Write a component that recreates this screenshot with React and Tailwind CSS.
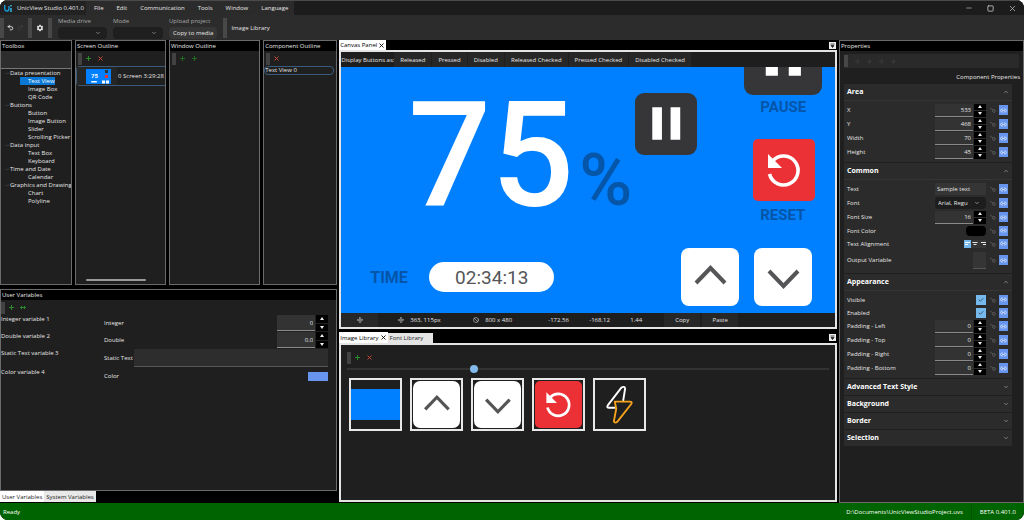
import React, { useId, useState } from 'react';
import { ChevronDown, ChevronUp, Check, Minus, Square, X, Move, Ban, Undo2, Redo2, Link2 } from 'lucide-react';
import { MdSettings } from 'react-icons/md';

const MENUS = ['File', 'Edit', 'Communication', 'Tools', 'Window', 'Language'];

const TOOLBOX = [
  { name: 'Data presentation', items: ['Text View', 'Image Box', 'QR Code'] },
  { name: 'Buttons', items: ['Button', 'Image Button', 'Slider', 'Scrolling Picker'] },
  { name: 'Data input', items: ['Text Box', 'Keyboard'] },
  { name: 'Time and Date', items: ['Calendar'] },
  { name: 'Graphics and Drawing', items: ['Chart', 'Polyline'] },
];

const BUTTON_STATES = ['Released', 'Pressed', 'Disabled', 'Released Checked', 'Pressed Checked', 'Disabled Checked'];

function Grip({ className = 'h-3' }) {
  return <span className={`w-1 shrink-0 bg-[radial-gradient(#5a5a5a_1px,transparent_1px)] bg-[size:2px_2px] opacity-60 ${className}`} />;
}

function ToolButton({ label, className, children }) {
  return (
    <button aria-label={label} className={`w-3 h-3 flex items-center justify-center ${className}`}>
      {children}
    </button>
  );
}

function PlusIcon() {
  return <svg width="5" height="5" viewBox="0 0 5 5"><path d="M2.5 0v5M0 2.5h5" stroke="currentColor" fill="none" /></svg>;
}

function CrossIcon() {
  return <svg width="5" height="5" viewBox="0 0 5 5"><path d="M.5.5l4 4M4.500.5l-4 4" stroke="currentColor" fill="none" /></svg>;
}

function DockPanel({ title, className, children }) {
  return (
    <section className={`flex flex-col border border-[#6b6b6b] bg-[#1f1f1f] overflow-hidden ${className}`}>
      <h2 className="h-[10px] shrink-0 bg-black px-px leading-[10px]">{title}</h2>
      {children}
    </section>
  );
}

function Spinner({ id, value, className = 'w-[51px]', size = 'h-[13px]' }) {
  return (
    <div className={`flex ${size} ${className}`}>
      <input
        id={id}
        defaultValue={value}
        inputMode="decimal"
        className="min-w-0 flex-1 bg-[#333333] border-b border-[#8a8a8a] pr-0.5 text-right outline-none"
      />
      <div className="w-3 ml-px flex flex-col gap-px text-[#eeeeee]">
        <button aria-label="Increase" className="flex-1 bg-black flex items-center justify-center">
          <svg width="4" height="3" viewBox="0 0 4 3"><path d="M0 3l2-3 2 3z" fill="currentColor" /></svg>
        </button>
        <button aria-label="Decrease" className="flex-1 bg-black flex items-center justify-center">
          <svg width="4" height="3" viewBox="0 0 4 3"><path d="M0 0l2 3 2-3z" fill="currentColor" /></svg>
        </button>
      </div>
    </div>
  );
}

function ArrowGlyph({ down, className }) {
  return (
    <svg viewBox="0 0 58 58" className={className}>
      <path d={down ? 'M15 23l14.500 15L44 23' : 'M15 35l14.500-15L44 35'} fill="none" stroke="#555557" strokeWidth="4" />
    </svg>
  );
}

function ResetGlyph({ className }) {
  return (
    <svg viewBox="0 0 62 62" className={className}>
      <path d="M16.500 35A14.500 14.500 0 1 0 20 21.500" fill="none" stroke="#fff" strokeWidth="3.600" />
      <path d="M15 15v14h14z" fill="#fff" />
    </svg>
  );
}

function PauseGlyph({ className }) {
  return (
    <svg viewBox="0 0 61 61" className={className}>
      <path d="M17 14h9.500v32H17zM35 14h9.500v32H35z" fill="#fff" />
    </svg>
  );
}

function BoltGlyph({ className }) {
  return (
    <svg viewBox="0 0 50 50" className={className} fill="none" strokeWidth="2" strokeLinejoin="round" strokeLinecap="round">
      <path d="M20 28.500h-6q-3 0-1.500-2.500L27 7q3.500-2 4 1L29 20.500" stroke="#fff" />
      <path d="M20 22h16q3 0 1.500 2.500L23 43q-3 2.500-4 0l2.500-13.500z" stroke="#f5a21c" />
    </svg>
  );
}

function ScreenThumb() {
  return (
    <svg width="25" height="15" viewBox="0 0 25 15" className="shrink-0">
      <rect width="25" height="15" fill="#0080ff" />
      <text x="5" y="9" fontSize="6" fontWeight="700" fontFamily="Roboto, sans-serif" fill="#fff">75</text>
      <rect x="19" y="1" width="3" height="3" fill="#333" />
      <rect x="19" y="6" width="3" height="3" fill="#eb3135" />
      <rect x="5" y="12" width="6" height="1.500" rx=".7" fill="#fff" />
      <rect x="16" y="11.500" width="3" height="3" fill="#fff" />
      <rect x="20" y="11.500" width="3" height="3" fill="#fff" />
    </svg>
  );
}

function TitleBar() {
  return (
    <header className="h-[15px] flex items-center bg-[#1c1c1c] border-t border-[#4a4a4a]">
      <div className="self-stretch flex items-center bg-[#2b2b2b]">
        <div className="w-[86px] h-full bg-[#222222] flex items-center pl-1 gap-[5px] whitespace-nowrap">
          <svg width="8" height="7" viewBox="0 0 8 7" fill="none">
            <path d="M.7 0v3.500Q.9 6 3 6T5 3V1" stroke="#149ddd" strokeWidth="1.400" />
            <path d="M7 3v4M7 0v1.500" stroke="#35c3f0" strokeWidth="1.400" />
          </svg>
          UnicView Studio 0.401.0
        </div>
        <nav className="flex items-center gap-px pl-0.5">
          {MENUS.map((m) => (
            <button key={m} className="px-1.5">{m}</button>
          ))}
        </nav>
      </div>
      <div className="ml-auto flex items-center gap-[14px] pr-[7px] text-[#bdbdbd]">
        <button aria-label="Minimize"><Minus size={8} /></button>
        <button aria-label="Maximize"><Square size={7} strokeWidth={3} /></button>
        <button aria-label="Close"><X size={9} /></button>
      </div>
    </header>
  );
}

function ToolbarSelect({ label, className }) {
  const id = useId();
  return (
    <div className={`flex flex-col ${className}`}>
      <label htmlFor={id} className="h-[10px] leading-[8px] text-[#a8a8a8]">{label}</label>
      <div className="relative">
        <select id={id} className="block w-full h-3 appearance-none rounded-sm bg-[#1f1f1f]" />
        <ChevronDown size={6} className="absolute right-1.5 top-[3px] pointer-events-none text-[#cccccc]" />
      </div>
    </div>
  );
}

function MainToolbar() {
  return (
    <div className="h-[25px] flex items-center gap-1.5 bg-[#2c2c2c] whitespace-nowrap">
      <div className="flex items-center gap-[3px]">
        <Grip className="h-5" />
        <button aria-label="Undo"><Undo2 size={7} strokeWidth={3} /></button>
        <button aria-label="Redo" className="text-[#4a4a4a]"><Redo2 size={7} /></button>
        <Grip className="h-5 ml-px" />
        <button aria-label="Settings" className="ml-px"><MdSettings size={8} /></button>
        <Grip className="h-5 ml-px" />
      </div>
      <ToolbarSelect label="Media drive" className="w-[49px]" />
      <ToolbarSelect label="Mode" className="w-[50px]" />
      <div className="flex flex-col">
        <span className="h-[10px] leading-[8px] text-[#a8a8a8]">Upload project</span>
        <button className="h-3 px-1 rounded-sm bg-[#363636]">Copy to media</button>
      </div>
      <Grip className="h-5" />
      <button className="-ml-0.5">Image Library</button>
    </div>
  );
}

function Toolbox() {
  const [selected, setSelected] = useState('Text View');
  return (
    <DockPanel title="Toolbox" className="w-[72px] shrink-0">
      <input aria-label="Search toolbox" className="h-[18px] shrink-0 bg-[#2d2d2d] border-b border-[#777777]" />
      <ul className="whitespace-nowrap leading-[8px]">
        {TOOLBOX.map((group) => (
          <li key={group.name}>
            <button className="flex items-center h-2 pl-1">
              <ChevronDown size={5} className="text-[#777777]" />
              {group.name}
            </button>
            <ul className="pl-[19px]">
              {group.items.map((item) => (
                <li key={item} className="h-2">
                  <button
                    onClick={() => setSelected(item)}
                    className={`block h-2 leading-[8px] pl-2 ${item === selected ? 'bg-[#0a78d4] text-white' : ''}`}
                  >
                    {item}
                  </button>
                </li>
              ))}
            </ul>
          </li>
        ))}
      </ul>
    </DockPanel>
  );
}

function Outlines() {
  return (
    <div className="flex gap-[3px] h-[245px]">
      <Toolbox />
      <DockPanel title="Screen Outline" className="flex-1 min-w-0">
        <div className="h-[15px] flex items-center pl-0.5">
          <Grip />
          <ToolButton label="Add screen" className="text-[#2a8a2a]"><PlusIcon /></ToolButton>
          <ToolButton label="Delete screen" className="text-[#c04a35]"><CrossIcon /></ToolButton>
        </div>
        <button className="h-5 flex items-center border border-r-0 border-[#3a5c7c] rounded-l-sm whitespace-nowrap">
          <span className="h-full pl-[9px] pr-1.5 flex items-center bg-[#262626]"><ScreenThumb /></span>
          <span className="pl-px">0 Screen 3:29:28</span>
        </button>
        <div className="mt-auto mb-[3px] ml-[10px] w-[60px] h-0.5 shrink-0 rounded bg-[#9a9a9a]" />
      </DockPanel>
      <DockPanel title="Window Outline" className="flex-1 min-w-0">
        <div className="h-[15px] flex items-center pl-0.5">
          <Grip />
          <ToolButton label="Add window" className="text-[#1f6a1f]"><PlusIcon /></ToolButton>
          <ToolButton label="Duplicate window" className="text-[#1f6a1f]"><PlusIcon /></ToolButton>
        </div>
      </DockPanel>
      <DockPanel title="Component Outline" className="w-[74px] shrink-0">
        <div className="h-[15px] flex items-center pl-0.5">
          <Grip />
          <ToolButton label="Delete component" className="text-[#c04a35]"><CrossIcon /></ToolButton>
        </div>
        <button className="h-[9px] mr-0.5 border border-[#3a5c7c] rounded-sm text-left leading-[7px]">Text View 0</button>
      </DockPanel>
    </div>
  );
}

function VariableRow({ name, type, className, children }) {
  const id = useId();
  return (
    <div className={`flex ${className}`}>
      <span className="w-[103px] shrink-0 leading-[8px]">{name}</span>
      <div className="flex-1 flex items-center">
        <label htmlFor={id} className="w-[29px] shrink-0 whitespace-nowrap">{type}</label>
        {children(id)}
      </div>
    </div>
  );
}

function UserVariables() {
  return (
    <div className="flex-1 flex flex-col">
      <DockPanel title="User Variables" className="flex-1">
        <div className="h-[15px] flex items-center">
          <Grip />
          <ToolButton label="Add variable" className="text-[#2a8a2a]"><PlusIcon /></ToolButton>
          <ToolButton label="Add array" className="text-[#2a8a2a]">
            <svg width="6" height="5" viewBox="0 0 6 5"><path d="M0 2.500h6M1.500 1v3M4.500 1v3" stroke="currentColor" fill="none" /></svg>
          </ToolButton>
        </div>
        <div className="flex flex-col gap-px pr-2">
          <VariableRow name="Integer variable 1" type="Integer" className="h-4">
            {(id) => <Spinner id={id} value="0" className="w-[51px] ml-auto" size="h-4" />}
          </VariableRow>
          <VariableRow name="Double variable 2" type="Double" className="h-4">
            {(id) => <Spinner id={id} value="0.0" className="w-[51px] ml-auto" size="h-4" />}
          </VariableRow>
          <VariableRow name="Static Text variable 3" type="Static Text" className="h-[18px]">
            {(id) => <input id={id} className="flex-1 h-full ml-px bg-[#2d2d2d] border-b border-[#555555]" />}
          </VariableRow>
          <VariableRow name="Color variable 4" type="Color" className="h-4">
            {(id) => <button id={id} aria-label="Color" className="ml-auto w-5 h-[9px] bg-[#6795ed]" />}
          </VariableRow>
        </div>
      </DockPanel>
      <div className="h-3 flex text-[#222222]">
        <button className="h-[11px] px-0.5 bg-white">User Variables</button>
        <button className="h-[11px] px-0.5 bg-[#e8e8e8]">System Variables</button>
      </div>
    </div>
  );
}

function PinIcon() {
  return (
    <button aria-label="Panel options" className="ml-auto mr-px self-center">
      <svg width="7" height="7" viewBox="0 0 7 7"><path d="M0 0h7v7H0z" fill="#eee" /><path d="M1.500 2h4M2 3.500h3L3.500 5.500z" stroke="#222" fill="#222" strokeWidth=".8" /></svg>
    </button>
  );
}

// The device screen is a free canvas, its widgets sit at their own coordinates.
function DeviceScreen() {
  return (
    <div className="relative flex-1 min-h-[246px] overflow-hidden bg-[#0080ff] font-[Roboto,sans-serif]">
      <span className="absolute left-[67px] top-[17px] text-[146px] leading-[146px] font-medium text-white">75</span>
      <span className="absolute left-[238px] top-[78px] text-[72px] leading-[72px] font-medium text-[#0555a8]">%</span>
      <div className="absolute left-[294px] top-[26px] size-[62px] rounded-[9px] bg-[#363638]">
        <PauseGlyph className="size-full" />
      </div>
      <div className="absolute left-[403px] -top-[50px] size-[78px] rounded-[9px] bg-[#363638]">
        <PauseGlyph className="size-full" />
      </div>
      <span className="absolute left-[419px] top-[31px] text-[15px] leading-[18px] font-bold text-[#0555a8]">PAUSE</span>
      <div className="absolute left-[412px] top-[72px] size-[62px] rounded-[5px] bg-[#eb3135]">
        <ResetGlyph className="size-full" />
      </div>
      <span className="absolute left-[419px] top-[139px] text-[15px] leading-[18px] font-bold text-[#0555a8]">RESET</span>
      <span className="absolute left-[29px] top-[202px] text-[16px] leading-[18px] font-bold text-[#0555a8]">TIME</span>
      <div className="absolute left-[88px] top-[195px] w-[125px] h-[30px] rounded-full bg-white text-center text-[19px] leading-[31px] text-[#555557]">
        02:34:13
      </div>
      <div className="absolute left-[340px] top-[181px] size-[58px] rounded-[8px] bg-white">
        <ArrowGlyph className="size-full" />
      </div>
      <div className="absolute left-[413px] top-[181px] size-[58px] rounded-[8px] bg-white">
        <ArrowGlyph down className="size-full" />
      </div>
    </div>
  );
}

function CanvasPanel() {
  return (
    <section className="flex flex-col">
      <div className="h-[10px] flex">
        <button className="flex items-center gap-px bg-white text-black px-px">
          Canvas Panel <X size={7} strokeWidth={3} />
        </button>
        <PinIcon />
      </div>
      <div className="flex flex-col border-2 border-[#e4e4e4]">
        <div className="h-[15px] flex items-center bg-[#1e1e1e]">
          <span className="w-[53px] whitespace-nowrap">Display Buttons as:</span>
          <div className="flex h-full gap-px">
            {BUTTON_STATES.map((s) => (
              <button key={s} className="px-1.5 bg-[#272727]">{s}</button>
            ))}
          </div>
        </div>
        <DeviceScreen />
        <div className="h-[14px] flex items-center bg-[#1e1e1e]">
          <button aria-label="Center" className="w-[37px] h-full bg-[#272727] flex items-center justify-center"><Move size={6} /></button>
          <span className="w-[85px] pl-5 flex items-center gap-1.5"><Move size={6} />363, 115px</span>
          <span className="w-[75px] pl-[10px] flex items-center gap-1.5"><Ban size={6} />800 x 480</span>
          <span className="w-[41px] pl-[10px]">-172.56</span>
          <span className="w-[41px] pl-[10px]">-168.12</span>
          <span className="w-[44px] pl-[10px]">1.44</span>
          <button className="w-[36px] h-full bg-[#272727]">Copy</button>
          <button className="w-[36px] h-full ml-0.5 bg-[#272727]">Paste</button>
        </div>
      </div>
    </section>
  );
}

function ImageLibrary() {
  const tile = 'size-[53px] border-2 border-[#e8e8e8] flex items-center justify-center';
  return (
    <section className="flex-1 flex flex-col">
      <div className="h-[11px] flex items-stretch">
        <button className="flex items-center gap-px bg-white text-black px-px">
          Image Library <X size={7} strokeWidth={3} />
        </button>
        <button className="mt-px w-[45px] pl-0.5 text-left bg-[#e4e4e4] text-[#222222]">Font Library</button>
        <PinIcon />
      </div>
      <div className="flex-1 border-2 border-[#e4e4e4] bg-[#1f1f1f] px-1.5 pt-1.5">
        <div className="h-[13px] flex items-center">
          <Grip />
          <ToolButton label="Add image" className="text-[#2a8a2a]"><PlusIcon /></ToolButton>
          <ToolButton label="Delete image" className="text-[#c04a35]"><CrossIcon /></ToolButton>
        </div>
        <input
          type="range"
          aria-label="Thumbnail size"
          defaultValue="26"
          className="block w-full h-[10px] appearance-none bg-transparent [&::-webkit-slider-runnable-track]:h-0.5 [&::-webkit-slider-runnable-track]:bg-[#333333] [&::-webkit-slider-thumb]:appearance-none [&::-webkit-slider-thumb]:size-2 [&::-webkit-slider-thumb]:-mt-[3px] [&::-webkit-slider-thumb]:rounded-full [&::-webkit-slider-thumb]:bg-[#84b9ec]"
        />
        <div className="mt-1 ml-0.5 flex flex-wrap gap-2">
          <button aria-label="Background" className={tile}>
            <span className="w-full h-[31px] bg-[#0080ff]" />
          </button>
          <button aria-label="Up" className={tile}>
            <ArrowGlyph className="size-[47px] rounded-[7px] bg-white" />
          </button>
          <button aria-label="Down" className={tile}>
            <ArrowGlyph down className="size-[47px] rounded-[7px] bg-white" />
          </button>
          <button aria-label="Reset" className={tile}>
            <ResetGlyph className="size-[47px] rounded-[5px] bg-[#eb3135]" />
          </button>
          <button aria-label="Power" className={tile}>
            <BoltGlyph className="size-[47px]" />
          </button>
        </div>
      </div>
    </section>
  );
}

function PropRow({ label, className = 'h-[14px]', children }) {
  const id = useId();
  return (
    <div className={`flex items-center ${className}`}>
      <label htmlFor={id}>{label}</label>
      <div className="ml-auto flex items-center">{children(id)}</div>
      <svg width="6" height="6" viewBox="0 0 6 6" className="ml-1 mr-[3px] text-[#555555]" fill="none" stroke="currentColor">
        <path d="M0 1l3 2" /><circle cx="4" cy="4" r="1.400" />
      </svg>
      <button aria-label={`Bind ${label}`} className="w-[9px] h-[10px] bg-[#6795ed] text-white flex items-center justify-center">
        <Link2 size={7} />
      </button>
    </div>
  );
}

function Section({ title, children }) {
  const [open, setOpen] = useState(Boolean(children));
  const Arrow = open ? ChevronUp : ChevronDown;
  return (
    <div className="bg-[#2b2b2b]">
      <button onClick={() => setOpen(!open)} className="w-full h-4 px-[3px] flex items-center justify-between text-[7px] font-bold text-white">
        {title}
        <Arrow size={6} className="text-[#cccccc]" />
      </button>
      {open && children && <div className="border-t border-[#353535] pl-[3px] pr-1 pt-0.5 pb-[3px]">{children}</div>}
    </div>
  );
}

function SpinRow({ label, value }) {
  return <PropRow label={label}>{(id) => <Spinner id={id} value={value} />}</PropRow>;
}

function CheckRow({ label }) {
  return (
    <PropRow label={label} className="h-[13px]">
      {(id) => (
        <span className="relative flex">
          <input id={id} type="checkbox" defaultChecked className="peer size-[10px] appearance-none bg-[#3a3a3a] checked:bg-[#76b9ed]" />
          <Check size={6} className="absolute left-0.5 top-0.5 text-black pointer-events-none hidden peer-checked:block" />
        </span>
      )}
    </PropRow>
  );
}

function AlignIcon({ d }) {
  return <svg width="6" height="5" viewBox="0 0 6 5" fill="none"><path d={d} stroke="currentColor" /></svg>;
}

function Properties() {
  return (
    <DockPanel title="Properties" className="w-[185px] shrink-0">
      <div className="mx-1 mt-[3px] h-[14px] shrink-0 bg-[#2a2a2a] flex items-center gap-[7px] text-[#474747]">
        <Grip />
        <Move size={5} /><Move size={5} /><Move size={5} /><Move size={5} />
      </div>
      <p className="pr-[3px] mt-[5px] mb-0.5 text-right leading-[9px]">Component Properties</p>
      <div className="ml-1 mr-[11px] flex flex-col gap-px">
        <Section title="Area">
          <SpinRow label="X" value="533" />
          <SpinRow label="Y" value="468" />
          <SpinRow label="Width" value="70" />
          <SpinRow label="Height" value="45" />
        </Section>
        <Section title="Common">
          <PropRow label="Text">
            {(id) => <input id={id} defaultValue="Sample text" className="w-[51px] h-3 pl-0.5 bg-[#353535]" />}
          </PropRow>
          <PropRow label="Font">
            {(id) => (
              <div className="relative">
                <select id={id} className="block w-[51px] h-3 pl-[3px] appearance-none rounded-sm bg-[#1d1d1d]">
                  <option>Arial, Regu</option>
                </select>
                <ChevronDown size={6} className="absolute right-1.5 top-[3px] pointer-events-none" />
              </div>
            )}
          </PropRow>
          <SpinRow label="Font Size" value="16" />
          <PropRow label="Font Color" className="h-[13px]">
            {(id) => <button id={id} aria-label="Font Color" className="w-5 h-[10px] rounded-sm bg-black" />}
          </PropRow>
          <PropRow label="Text Alignment" className="h-[13px]">
            {(id) => (
              <div className="flex">
                <button id={id} aria-label="Align left" className="w-[7px] h-2 bg-[#76b9ed] text-white flex items-center justify-center"><AlignIcon d="M0 1.500h5M0 3.500h3" /></button>
                <button aria-label="Align center" className="w-2 h-2 bg-[#363636] flex items-center justify-center"><AlignIcon d="M.5 1.500h5M1.500 3.500h3" /></button>
                <button aria-label="Align right" className="w-[7px] h-2 bg-[#363636] flex items-center justify-center"><AlignIcon d="M1 1.500h5M3 3.500h3" /></button>
              </div>
            )}
          </PropRow>
          <PropRow label="Output Variable" className="h-5">
            {(id) => <input id={id} className="w-[13px] h-[17px] bg-[#353535] border-b border-[#555555]" />}
          </PropRow>
        </Section>
        <Section title="Appearance">
          <CheckRow label="Visible" />
          <CheckRow label="Enabled" />
          <SpinRow label="Padding - Left" value="0" />
          <SpinRow label="Padding - Top" value="0" />
          <SpinRow label="Padding - Right" value="0" />
          <SpinRow label="Padding - Bottom" value="0" />
        </Section>
        <Section title="Advanced Text Style" />
        <Section title="Background" />
        <Section title="Border" />
        <Section title="Selection" />
      </div>
    </DockPanel>
  );
}

export default function App() {
  return (
    <div className="min-h-screen flex flex-col rounded-lg overflow-hidden bg-black text-[#e6e6e6] text-[6px] leading-[8px] font-['Open_Sans',sans-serif]">
      <TitleBar />
      <MainToolbar />
      <main className="flex-1 flex gap-0.5">
        <div className="flex-[21] min-w-0 flex flex-col gap-1">
          <Outlines />
          <UserVariables />
        </div>
        <div className="flex-[31] min-w-0 flex flex-col gap-[3px] pb-px">
          <CanvasPanel />
          <ImageLibrary />
        </div>
        <Properties />
      </main>
      <footer className="h-[17px] flex items-center bg-[#006400] pl-[3px] pr-2 text-white">
        <span>Ready</span>
        <span className="ml-auto pr-2">D:\Documents\UnicViewStudioProject.uvs</span>
        <span className="pl-2 py-1 border-l border-[#005500]">BETA 0.401.0</span>
      </footer>
    </div>
  );
}
